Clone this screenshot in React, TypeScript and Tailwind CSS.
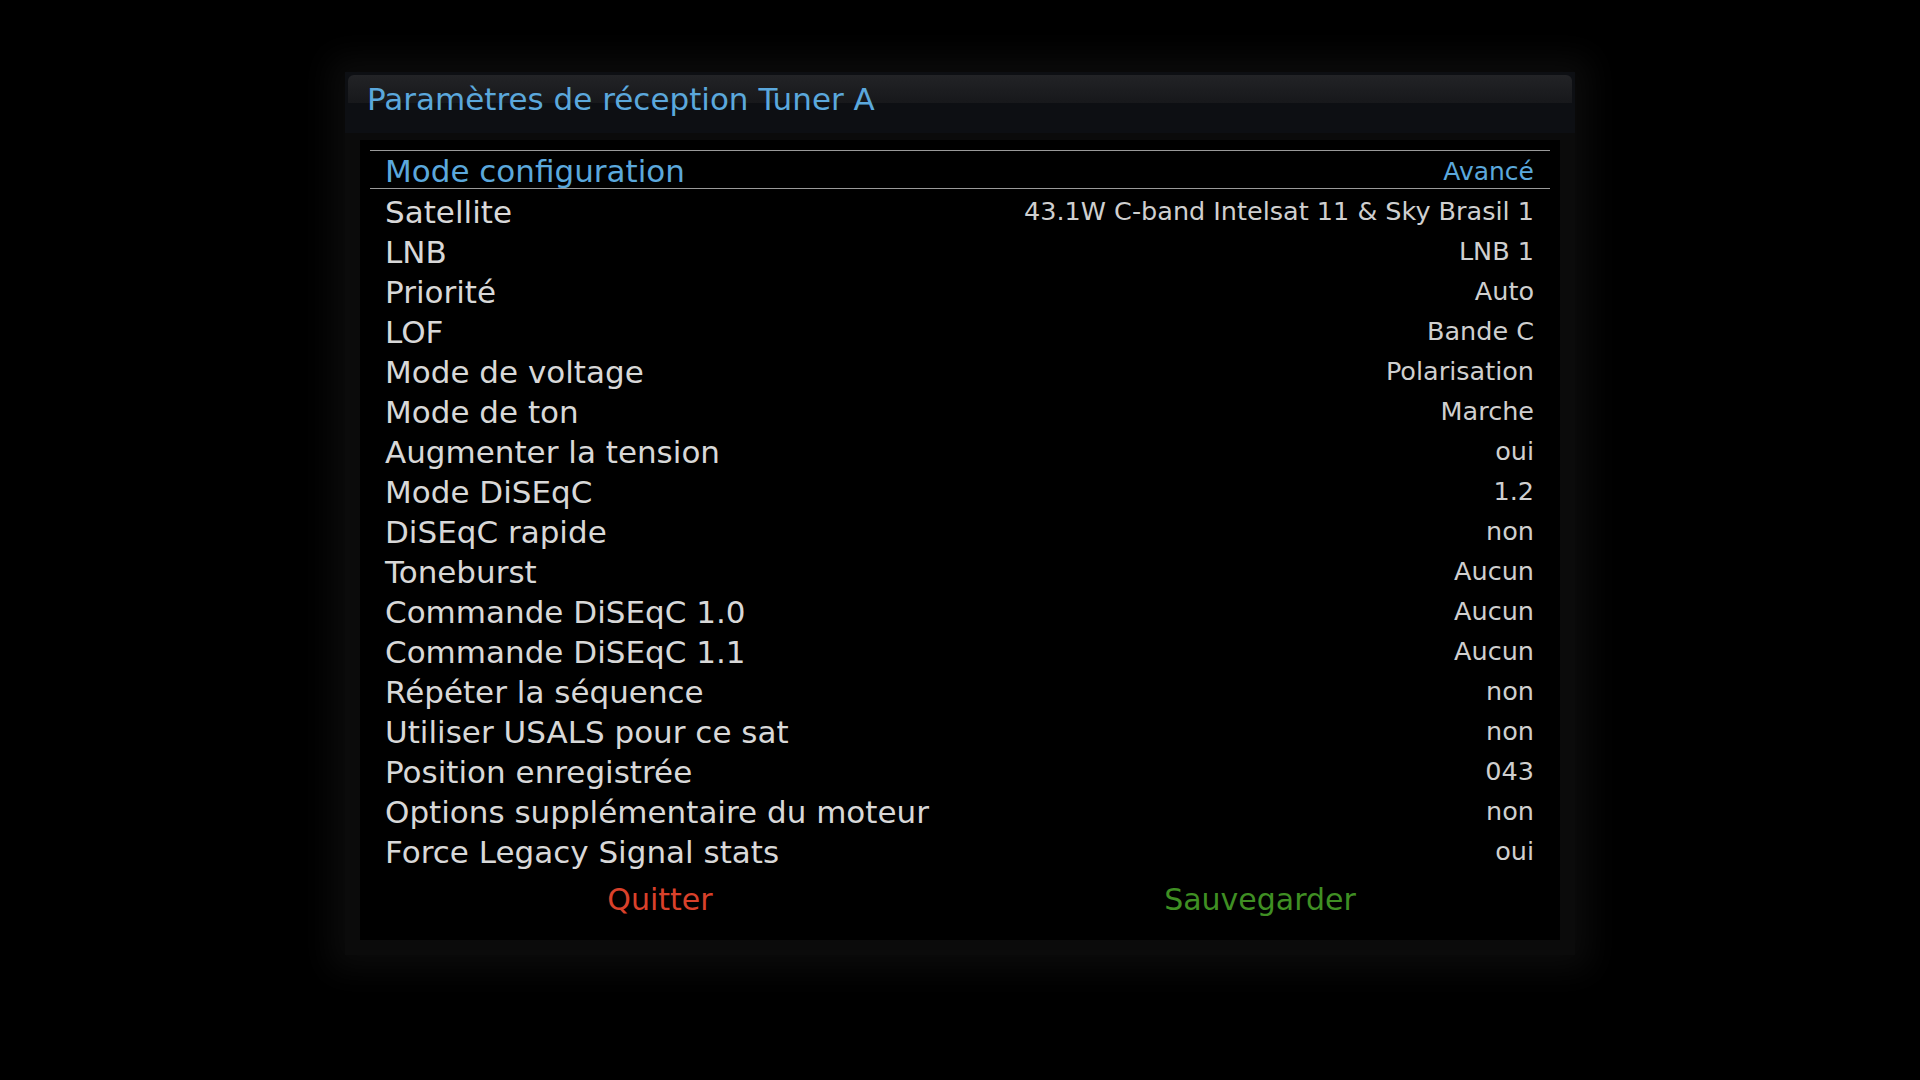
const rows: [string, string][] = [
  ['Satellite', '43.1W C-band Intelsat 11 & Sky Brasil 1'],
  ['LNB', 'LNB 1'],
  ['Priorité', 'Auto'],
  ['LOF', 'Bande C'],
  ['Mode de voltage', 'Polarisation'],
  ['Mode de ton', 'Marche'],
  ['Augmenter la tension', 'oui'],
  ['Mode DiSEqC', '1.2'],
  ['DiSEqC rapide', 'non'],
  ['Toneburst', 'Aucun'],
  ['Commande DiSEqC 1.0', 'Aucun'],
  ['Commande DiSEqC 1.1', 'Aucun'],
  ['Répéter la séquence', 'non'],
  ['Utiliser USALS pour ce sat', 'non'],
  ['Position enregistrée', '043'],
  ['Options supplémentaire du moteur', 'non'],
  ['Force Legacy Signal stats', 'oui'],
];

export default function App() {
  return (
    <div
      className="w-[1920px] h-[1080px] bg-black overflow-hidden pl-[345px] pt-[72px]"
      style={{ fontFamily: '"DejaVu Sans", Verdana, sans-serif' }}
    >
      <div className="w-[1230px] bg-[#0b0b0b] shadow-[0_0_30px_16px_#0b0b0b] pb-[15px]">
        {/* title */}
        <div className="relative h-[61px] bg-[#0d0f13] px-[3px] pt-[3px]">
          <div className="h-[28px] rounded-t-[6px] bg-gradient-to-b from-[#222326] to-[#17181b]" />
          <div className="absolute left-[22px] top-0 h-[61px] flex items-center text-[31px] text-[#5ba8dc] pb-[7px]">
            Paramètres de réception Tuner A
          </div>
        </div>

        {/* body */}
        <div className="mx-[15px] mt-[7px] h-[800px] bg-black pt-[10px] px-[10px]">
          <div className="border-t border-b border-[#9a9a9a] h-[39px] flex items-center justify-between pl-[15px] pr-[16px] pt-[4px]">
            <span className="text-[31px] text-[#5ba8dc] leading-none">Mode configuration</span>
            <span className="text-[25px] text-[#5ba8dc] leading-none">Avancé</span>
          </div>

          <div className="mt-[3px] flex flex-col">
            {rows.map(([label, value]) => (
              <div key={label} className="h-[40px] flex items-center justify-between pl-[15px] pr-[16px]">
                <span className="text-[31px] text-[#d8d8d8] leading-none">{label}</span>
                <span className="text-[25.5px] text-[#cfcfcf] leading-none">{value}</span>
              </div>
            ))}
          </div>

          <div className="grid grid-cols-2 h-[56px] items-center -mx-[10px]">
            <div className="text-center text-[30px] text-[#d9412b] leading-none">Quitter</div>
            <div className="text-center text-[30px] text-[#3f8f23] leading-none">Sauvegarder</div>
          </div>
        </div>
      </div>
    </div>
  );
}
